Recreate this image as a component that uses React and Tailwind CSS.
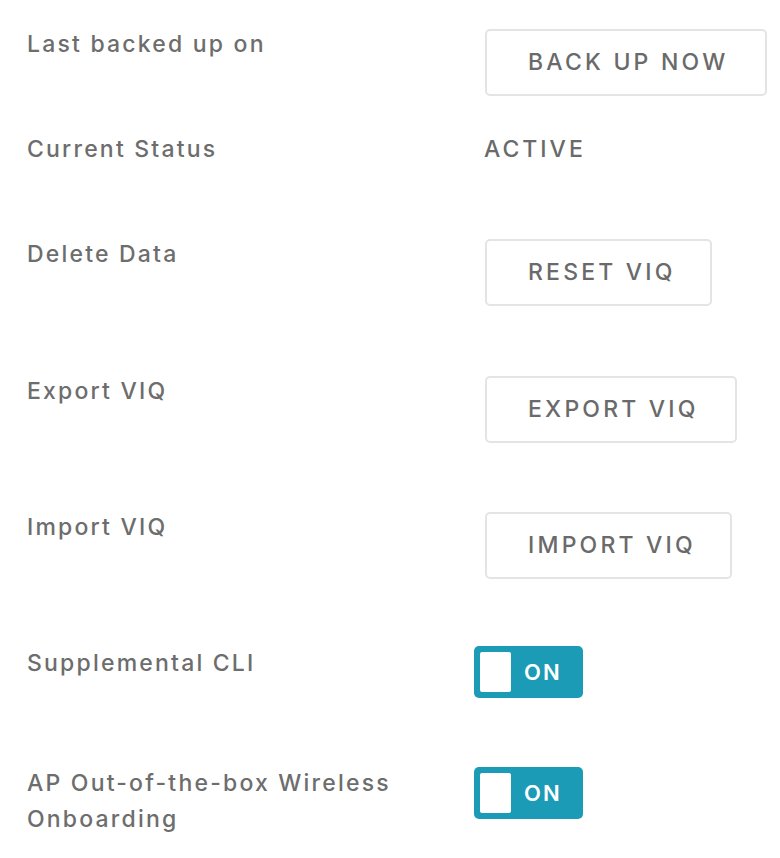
import React from 'react';

const font = { fontFamily: 'Inter, "Noto Sans", sans-serif' };

const Btn = ({ children, w }) => (
  <button
    className={`h-[67px] ${w} ml-[11px] rounded-[5px] border-2 border-[#e4e4e4] bg-white text-left pl-[41px] text-[23px] font-medium tracking-[3.2px] text-[#6a6a6a]`}
  >
    {children}
  </button>
);

const Toggle = () => (
  <div className="flex h-[52px] w-[109px] items-center rounded-[5px] bg-[#1b9bb5] pl-[6px]">
    <div className="h-[40px] w-[31px] rounded-[2px] bg-white" />
    <span className="ml-[13px] text-[22px] font-semibold tracking-[2px] text-white">ON</span>
  </div>
);

const Label = ({ children, className = '' }) => (
  <div className={`w-[447px] shrink-0 text-[23px] leading-[36px] font-medium tracking-[2.2px] text-[#6d6d6d] ${className}`}>
    {children}
  </div>
);

export default function App() {
  return (
    <div className="min-h-[858px] w-[780px] bg-white pl-[27px] pt-[29px]" style={font}>
      <div className="flex items-start">
        <Label className="-mt-[3px]">Last backed up on</Label>
        <Btn w="w-[282px]">BACK UP NOW</Btn>
      </div>

      <div className="mt-[35px] flex items-start">
        <Label>Current Status</Label>
        <div className="ml-[10px] text-[23px] leading-[36px] font-medium tracking-[3px] text-[#6a6a6a]">ACTIVE</div>
      </div>

      <div className="mt-[72px] flex items-start">
        <Label className="-mt-[3px]">Delete Data</Label>
        <Btn w="w-[227px]">RESET VIQ</Btn>
      </div>

      <div className="mt-[70px] flex items-start">
        <Label className="-mt-[3px]">Export VIQ</Label>
        <Btn w="w-[252px]">EXPORT VIQ</Btn>
      </div>

      <div className="mt-[69px] flex items-start">
        <Label className="-mt-[3px]">Import VIQ</Label>
        <Btn w="w-[247px]">IMPORT VIQ</Btn>
      </div>

      <div className="mt-[67px] flex items-start">
        <Label className="-mt-[1px]">Supplemental CLI</Label>
        <Toggle />
      </div>

      <div className="mt-[69px] flex items-start">
        <Label className="-mt-[2px] pr-[40px]">AP Out-of-the-box Wireless Onboarding</Label>
        <Toggle />
      </div>
    </div>
  );
}
